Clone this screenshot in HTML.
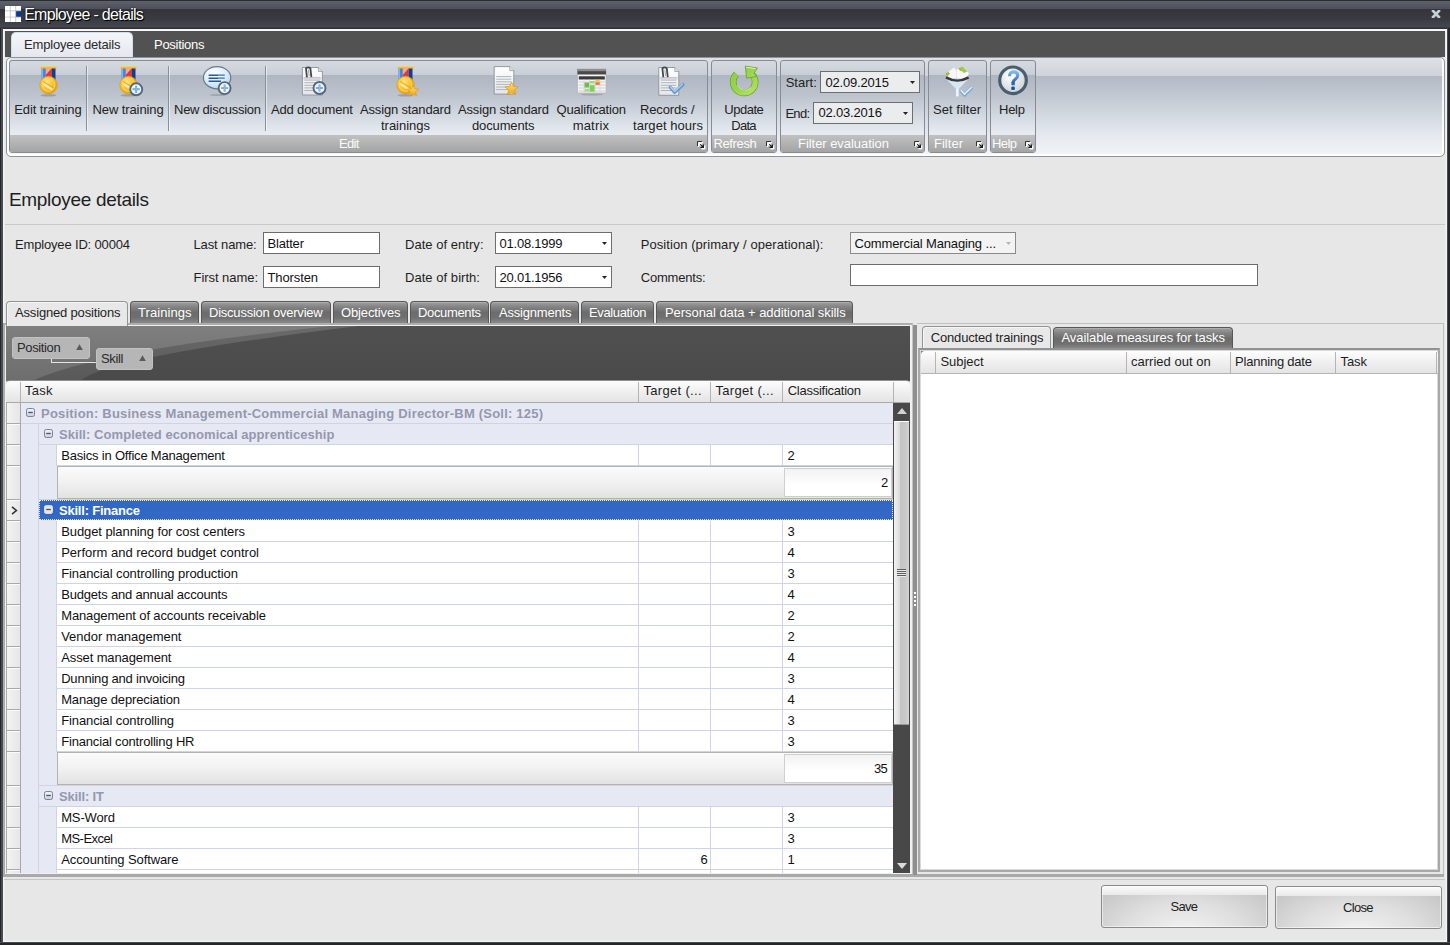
<!DOCTYPE html>
<html><head><meta charset="utf-8"><title>Employee - details</title>
<style>
html,body{margin:0;padding:0}
body{width:1450px;height:945px;overflow:hidden;background:#e7e7e7;font-family:"Liberation Sans", sans-serif;position:relative}
div,span,svg{position:absolute;box-sizing:border-box}
.t{white-space:nowrap;display:block}
</style></head><body>
<div style="left:0px;top:0px;width:1450px;height:29px;background:linear-gradient(#2b2d31 0,#2b2d31 1px,#5d616c 1px,#4d5059 9px,#33353a 9px,#383a40 18px,#44474f 27px,#2e3034 28px,#2e3034 29px)"></div>
<div style="left:0px;top:28px;width:3px;height:917px;background:linear-gradient(90deg,#25272b 0,#25272b 1.5px,#484b52 1.5px,#484b52 3px)"></div>
<div style="left:1447px;top:28px;width:3px;height:917px;background:linear-gradient(90deg,#484b52 0,#484b52 1.5px,#25272b 1.5px,#25272b 3px)"></div>
<div style="left:0px;top:942px;width:1450px;height:3px;background:linear-gradient(#484b52 0,#484b52 1.5px,#25272b 1.5px,#25272b 3px)"></div>
<div style="left:3px;top:29px;width:1444px;height:913px;border:1px solid #f4f4f4;border-top:2px solid #f6f6f6;box-shadow:inset 0 0 0 1px #ececec"></div>
<svg style="left:5px;top:6px" width="16" height="16" viewBox="0 0 16 16"><rect width="16" height="16" fill="#fff"/><rect x="10.8" y="4.8" width="5.2" height="6.3" fill="#0a3a96"/><path d="M5.3 0V16M10.7 0V16M0 4.8H16M0 11.1H16" stroke="#b9b9b9" stroke-width=".7"/></svg>
<span class="t" style="left:24.14px;top:7.06px;font-size:16px;line-height:16px;color:#fff;letter-spacing:-0.700px;text-shadow:1px 1px 0 #000,0 0 2px #000;">Employee - details</span>
<svg style="left:1431px;top:10px" width="10" height="8" viewBox="0 0 10 8"><path d="M1.2 0L8.8 8M8.8 0L1.2 8" stroke="#c9cdd7" stroke-width="2.7"/></svg>
<div style="left:5px;top:31px;width:1440px;height:26px;background:#525252"></div>
<div style="left:11px;top:32px;width:122px;height:27px;background:linear-gradient(#f4f6f9,#e3e6ec);border:1px solid #cfe0ea;border-bottom:none;border-radius:5px 5px 0 0"></div>
<span class="t" style="left:24.0px;top:38.00px;font-size:13px;line-height:13px;color:#2a2a2a;letter-spacing:-0.167px;">Employee details</span>
<span class="t" style="left:154.0px;top:38.00px;font-size:13px;line-height:13px;color:#fff;letter-spacing:-0.281px;">Positions</span>
<div style="left:6px;top:57px;width:1439px;height:100px;border:1px solid #8f949b;border-radius:5px;background:linear-gradient(#dee1e6 0,#cfd3da 18px,#b4bac5 18px,#c6ccd5 42px,#e3e8ee 75px,#f1f4f8 96px);box-shadow:inset 2px 0 0 rgba(255,255,255,.85),inset -2px 0 0 rgba(255,255,255,.85),inset 0 -2px 0 rgba(255,255,255,.9)"></div>
<div style="left:9px;top:60px;width:699px;height:93px;border:1px solid #868b94;border-radius:3px;overflow:hidden;background:linear-gradient(#d6dae0 0,#c9ced6 14px,#afb6c1 14px,#bdc4ce 35px,#e0e5ec 66px,#e9edf3 75px)"><div style="left:0;right:0;top:74px;height:18px;background:linear-gradient(#c1c1c1,#a2a2a2)"></div><svg style="left:687px;top:80px" width="9" height="9" viewBox="0 0 9 9"><path d="M1.5 6V1.5H6M8 4.5V8H4.5Z" fill="#fff" stroke="#fff" stroke-width="1" fill-opacity=".9" stroke-opacity=".8"/><path d="M0.5 5V0.5H5" fill="none" stroke="#333" stroke-width="1"/><path d="M7 3V7H3Z" fill="#1c1c1c"/><path d="M3.2 3.2L6 6" stroke="#1c1c1c" stroke-width="1"/></svg></div>
<span class="t" style="left:339.1px;top:136.90px;font-size:13px;line-height:13px;color:#fbfbfb;letter-spacing:-0.700px;">Edit</span>
<div style="left:711px;top:60px;width:66px;height:93px;border:1px solid #868b94;border-radius:3px;overflow:hidden;background:linear-gradient(#d6dae0 0,#c9ced6 14px,#afb6c1 14px,#bdc4ce 35px,#e0e5ec 66px,#e9edf3 75px)"><div style="left:0;right:0;top:74px;height:18px;background:linear-gradient(#c1c1c1,#a2a2a2)"></div><svg style="left:54px;top:80px" width="9" height="9" viewBox="0 0 9 9"><path d="M1.5 6V1.5H6M8 4.5V8H4.5Z" fill="#fff" stroke="#fff" stroke-width="1" fill-opacity=".9" stroke-opacity=".8"/><path d="M0.5 5V0.5H5" fill="none" stroke="#333" stroke-width="1"/><path d="M7 3V7H3Z" fill="#1c1c1c"/><path d="M3.2 3.2L6 6" stroke="#1c1c1c" stroke-width="1"/></svg></div>
<span class="t" style="left:713.5px;top:136.90px;font-size:13px;line-height:13px;color:#fbfbfb;letter-spacing:-0.372px;">Refresh</span>
<div style="left:780px;top:60px;width:145px;height:93px;border:1px solid #868b94;border-radius:3px;overflow:hidden;background:linear-gradient(#d6dae0 0,#c9ced6 14px,#afb6c1 14px,#bdc4ce 35px,#e0e5ec 66px,#e9edf3 75px)"><div style="left:0;right:0;top:74px;height:18px;background:linear-gradient(#c1c1c1,#a2a2a2)"></div><svg style="left:133px;top:80px" width="9" height="9" viewBox="0 0 9 9"><path d="M1.5 6V1.5H6M8 4.5V8H4.5Z" fill="#fff" stroke="#fff" stroke-width="1" fill-opacity=".9" stroke-opacity=".8"/><path d="M0.5 5V0.5H5" fill="none" stroke="#333" stroke-width="1"/><path d="M7 3V7H3Z" fill="#1c1c1c"/><path d="M3.2 3.2L6 6" stroke="#1c1c1c" stroke-width="1"/></svg></div>
<span class="t" style="left:798.0px;top:136.90px;font-size:13px;line-height:13px;color:#fbfbfb;letter-spacing:-0.049px;">Filter evaluation</span>
<div style="left:928px;top:60px;width:59px;height:93px;border:1px solid #868b94;border-radius:3px;overflow:hidden;background:linear-gradient(#d6dae0 0,#c9ced6 14px,#afb6c1 14px,#bdc4ce 35px,#e0e5ec 66px,#e9edf3 75px)"><div style="left:0;right:0;top:74px;height:18px;background:linear-gradient(#c1c1c1,#a2a2a2)"></div><svg style="left:47px;top:80px" width="9" height="9" viewBox="0 0 9 9"><path d="M1.5 6V1.5H6M8 4.5V8H4.5Z" fill="#fff" stroke="#fff" stroke-width="1" fill-opacity=".9" stroke-opacity=".8"/><path d="M0.5 5V0.5H5" fill="none" stroke="#333" stroke-width="1"/><path d="M7 3V7H3Z" fill="#1c1c1c"/><path d="M3.2 3.2L6 6" stroke="#1c1c1c" stroke-width="1"/></svg></div>
<span class="t" style="left:934.0px;top:136.90px;font-size:13px;line-height:13px;color:#fbfbfb;letter-spacing:0.022px;">Filter</span>
<div style="left:990px;top:60px;width:46px;height:93px;border:1px solid #868b94;border-radius:3px;overflow:hidden;background:linear-gradient(#d6dae0 0,#c9ced6 14px,#afb6c1 14px,#bdc4ce 35px,#e0e5ec 66px,#e9edf3 75px)"><div style="left:0;right:0;top:74px;height:18px;background:linear-gradient(#c1c1c1,#a2a2a2)"></div><svg style="left:34px;top:80px" width="9" height="9" viewBox="0 0 9 9"><path d="M1.5 6V1.5H6M8 4.5V8H4.5Z" fill="#fff" stroke="#fff" stroke-width="1" fill-opacity=".9" stroke-opacity=".8"/><path d="M0.5 5V0.5H5" fill="none" stroke="#333" stroke-width="1"/><path d="M7 3V7H3Z" fill="#1c1c1c"/><path d="M3.2 3.2L6 6" stroke="#1c1c1c" stroke-width="1"/></svg></div>
<span class="t" style="left:992.0px;top:136.90px;font-size:13px;line-height:13px;color:#fbfbfb;letter-spacing:-0.583px;">Help</span>
<div style="left:86px;top:66px;width:2px;height:65px;background:linear-gradient(90deg,#8a8f98 0,#8a8f98 1px,rgba(255,255,255,.5) 1px)"></div>
<div style="left:168px;top:66px;width:2px;height:65px;background:linear-gradient(90deg,#8a8f98 0,#8a8f98 1px,rgba(255,255,255,.5) 1px)"></div>
<div style="left:265px;top:66px;width:2px;height:65px;background:linear-gradient(90deg,#8a8f98 0,#8a8f98 1px,rgba(255,255,255,.5) 1px)"></div>
<svg style="left:32px;top:65px" width="34" height="32" viewBox="0 0 34 32"><ellipse cx="16.5" cy="30.3" rx="8" ry="1.2" fill="rgba(90,95,105,.35)"/><rect x="9.5" y="3" width="4.3" height="13" fill="#3f86d6"/><rect x="9.5" y="3" width="1.6" height="13" fill="#7fb4ea"/><rect x="13.8" y="3" width="6" height="13" fill="#d63a42"/><path d="M13.8 3H19.8L13.8 10Z" fill="#f2a9a6"/><rect x="19.8" y="3" width="3.7" height="13" fill="#123c92"/><rect x="8.7" y="1.3" width="15.8" height="2.2" rx=".6" fill="#f3b322"/><rect x="8.7" y="1.3" width="15.8" height=".9" rx=".4" fill="#fbd96f"/><circle cx="16.5" cy="20" r="8.7" fill="url(#gGold)" stroke="#e2a015" stroke-width=".8"/><circle cx="16.5" cy="20" r="6.3" fill="none" stroke="#fbd66a" stroke-width="1"/><path d="M11.5 16.5L21 22.5" stroke="#e8a51c" stroke-width="1" stroke-linecap="round"/><path d="M12 19.5L19.5 24" stroke="#fde9a6" stroke-width="2" stroke-linecap="round"/></svg>
<span class="t" style="left:14.2px;top:102.60px;font-size:13px;line-height:13px;color:#222;letter-spacing:-0.096px;">Edit training</span>
<svg style="left:112px;top:65px" width="34" height="32" viewBox="0 0 34 32"><ellipse cx="16.5" cy="30.3" rx="8" ry="1.2" fill="rgba(90,95,105,.35)"/><rect x="9.5" y="3" width="4.3" height="13" fill="#3f86d6"/><rect x="9.5" y="3" width="1.6" height="13" fill="#7fb4ea"/><rect x="13.8" y="3" width="6" height="13" fill="#d63a42"/><path d="M13.8 3H19.8L13.8 10Z" fill="#f2a9a6"/><rect x="19.8" y="3" width="3.7" height="13" fill="#123c92"/><rect x="8.7" y="1.3" width="15.8" height="2.2" rx=".6" fill="#f3b322"/><rect x="8.7" y="1.3" width="15.8" height=".9" rx=".4" fill="#fbd96f"/><circle cx="16.5" cy="20" r="8.7" fill="url(#gGold)" stroke="#e2a015" stroke-width=".8"/><circle cx="16.5" cy="20" r="6.3" fill="none" stroke="#fbd66a" stroke-width="1"/><path d="M11.5 16.5L21 22.5" stroke="#e8a51c" stroke-width="1" stroke-linecap="round"/><path d="M12 19.5L19.5 24" stroke="#fde9a6" stroke-width="2" stroke-linecap="round"/><circle cx="24.2" cy="24.3" r="6" fill="#f2f6fa" stroke="#52687c" stroke-width="1.9"/><path d="M24.2 20.7V27.900000000000002M20.599999999999998 24.3H27.8" stroke="#5e9fe4" stroke-width="1.9"/><path d="M24.2 20.7V27.900000000000002M20.599999999999998 24.3H27.8" stroke="#9cc4ee" stroke-width=".7"/></svg>
<span class="t" style="left:92.5px;top:102.60px;font-size:13px;line-height:13px;color:#222;letter-spacing:-0.097px;">New training</span>
<svg style="left:201px;top:65px" width="34" height="32" viewBox="0 0 34 32"><ellipse cx="17" cy="30" rx="8" ry="1.1" fill="rgba(90,95,105,.3)"/><path d="M19 21L24.5 28L25.5 19Z" fill="#b7d3ea" stroke="#70777e" stroke-width=".8"/><ellipse cx="16.1" cy="12.7" rx="13.7" ry="11.1" fill="url(#gBub)" stroke="#70777e" stroke-width="1.2"/><path d="M7.6 10.3H23.6M7.6 13.3H23.6M7.6 16.3H20" stroke="#2a55a0" stroke-width="1.5"/><path d="M17 10.3H23.6M17 13.3H23.6" stroke="#9cc3e6" stroke-width="1.5" stroke-opacity=".55"/><circle cx="23.6" cy="23.1" r="6" fill="#f2f6fa" stroke="#52687c" stroke-width="1.9"/><path d="M23.6 19.5V26.700000000000003M20.0 23.1H27.200000000000003" stroke="#5e9fe4" stroke-width="1.9"/><path d="M23.6 19.5V26.700000000000003M20.0 23.1H27.200000000000003" stroke="#9cc4ee" stroke-width=".7"/></svg>
<span class="t" style="left:174.0px;top:102.60px;font-size:13px;line-height:13px;color:#222;letter-spacing:-0.256px;">New discussion</span>
<svg style="left:296px;top:65px" width="34" height="32" viewBox="0 0 34 32"><path d="M6.4 2.5H22.4L26.4 6.5V30.0H6.4Z" fill="url(#gPage)" stroke="#8d9198" stroke-width=".9"/><path d="M22.4 2.5V6.5H26.4" fill="#dfe2e6" stroke="#8d9198" stroke-width=".7"/><path d="M8.4 12.5H23.9" stroke="#a9adb5" stroke-width=".9"/><path d="M8.4 15.1H23.9" stroke="#a9adb5" stroke-width=".9"/><path d="M8.4 17.7H23.9" stroke="#a9adb5" stroke-width=".9"/><path d="M8.4 20.3H23.9" stroke="#a9adb5" stroke-width=".9"/><path d="M8.4 22.9H23.9" stroke="#a9adb5" stroke-width=".9"/><path d="M8.4 25.5H23.9" stroke="#a9adb5" stroke-width=".9"/><path d="M11.0 13.0L10.0 3.5Q12.2 1.3 14.4 3.5L15.4 12.5" fill="none" stroke="#44474d" stroke-width="1.8"/><path d="M12.4 4.5L13.2 11.0" stroke="#a4a8b0" stroke-width="1"/><rect x="7.4" y="12.0" width="18" height="2.6" fill="#c9ccd1" fill-opacity=".7"/><circle cx="23.5" cy="23" r="6" fill="#f2f6fa" stroke="#52687c" stroke-width="1.9"/><path d="M23.5 19.4V26.6M19.9 23H27.1" stroke="#5e9fe4" stroke-width="1.9"/><path d="M23.5 19.4V26.6M19.9 23H27.1" stroke="#9cc4ee" stroke-width=".7"/></svg>
<span class="t" style="left:271.0px;top:102.60px;font-size:13px;line-height:13px;color:#222;letter-spacing:-0.168px;">Add document</span>
<svg style="left:391px;top:65px" width="34" height="32" viewBox="0 0 34 32"><ellipse cx="14.5" cy="30.3" rx="8" ry="1.2" fill="rgba(90,95,105,.35)"/><rect x="7.5" y="3" width="4.3" height="13" fill="#3f86d6"/><rect x="7.5" y="3" width="1.6" height="13" fill="#7fb4ea"/><rect x="11.8" y="3" width="6" height="13" fill="#d63a42"/><path d="M11.8 3H17.8L11.8 10Z" fill="#f2a9a6"/><rect x="17.8" y="3" width="3.7" height="13" fill="#123c92"/><rect x="6.699999999999999" y="1.3" width="15.8" height="2.2" rx=".6" fill="#f3b322"/><rect x="6.699999999999999" y="1.3" width="15.8" height=".9" rx=".4" fill="#fbd96f"/><circle cx="14.5" cy="20" r="8.7" fill="url(#gGold)" stroke="#e2a015" stroke-width=".8"/><circle cx="14.5" cy="20" r="6.3" fill="none" stroke="#fbd66a" stroke-width="1"/><path d="M9.5 16.5L19 22.5" stroke="#e8a51c" stroke-width="1" stroke-linecap="round"/><path d="M10 19.5L17.5 24" stroke="#fde9a6" stroke-width="2" stroke-linecap="round"/><polygon points="22.00,20.00 23.59,23.82 27.71,24.15 24.57,26.83 25.53,30.85 22.00,28.70 18.47,30.85 19.43,26.83 16.29,24.15 20.41,23.82" fill="url(#gStar)" stroke="#e79c12" stroke-width=".8" stroke-linejoin="round"/></svg>
<span class="t" style="left:360.0px;top:102.60px;font-size:13px;line-height:13px;color:#222;letter-spacing:-0.160px;">Assign standard</span>
<span class="t" style="left:381.0px;top:118.80px;font-size:13px;line-height:13px;color:#222;letter-spacing:-0.018px;">trainings</span>
<svg style="left:488.5px;top:65px" width="34" height="32" viewBox="0 0 34 32"><path d="M5.2 1.6H20.8L24.8 5.6V29.1H5.2Z" fill="url(#gPage)" stroke="#8d9198" stroke-width=".9"/><path d="M20.8 1.6V5.6H24.8" fill="#dfe2e6" stroke="#8d9198" stroke-width=".7"/><path d="M7.2 11.6H22.3" stroke="#a9adb5" stroke-width=".9"/><path d="M7.2 14.2H22.3" stroke="#a9adb5" stroke-width=".9"/><path d="M7.2 16.8H22.3" stroke="#a9adb5" stroke-width=".9"/><path d="M7.2 19.4H22.3" stroke="#a9adb5" stroke-width=".9"/><path d="M7.2 22.0H22.3" stroke="#a9adb5" stroke-width=".9"/><path d="M7.2 24.6H22.3" stroke="#a9adb5" stroke-width=".9"/><polygon points="22.60,17.00 24.45,21.45 29.26,21.84 25.60,24.97 26.71,29.66 22.60,27.15 18.49,29.66 19.60,24.97 15.94,21.84 20.75,21.45" fill="url(#gStar)" stroke="#e79c12" stroke-width=".8" stroke-linejoin="round"/></svg>
<span class="t" style="left:458.0px;top:102.60px;font-size:13px;line-height:13px;color:#222;letter-spacing:-0.160px;">Assign standard</span>
<span class="t" style="left:472.0px;top:118.80px;font-size:13px;line-height:13px;color:#222;letter-spacing:-0.137px;">documents</span>
<svg style="left:576px;top:65px" width="34" height="32" viewBox="0 0 34 32"><ellipse cx="16" cy="29.5" rx="11" ry="1.1" fill="rgba(90,95,105,.3)"/><rect x="1.5" y="4" width="28.5" height="24" fill="#f4f4f4" stroke="#b3b3b3" stroke-width=".7"/><rect x="1.5" y="4" width="28.5" height="5.5" fill="#4a4a4a"/><rect x="1.5" y="4" width="28.5" height="2.2" fill="#8e8e8e"/><rect x="2.8" y="11.3" width="26" height="3.2" fill="#3a3a3a"/><path d="M2.8 17H28.8M2.8 20H28.8M2.8 23H28.8M2.8 26H28.8" stroke="#c9c9c9" stroke-width=".8"/><path d="M8 14.5V27.5M13.5 14.5V27.5M19 14.5V27.5M24 14.5V27.5" stroke="#d4d4d4" stroke-width=".7"/><rect x="8.5" y="17.5" width="4.6" height="5" fill="#6cc04a"/><rect x="13.8" y="20.2" width="4.8" height="6.5" fill="#7fd05a"/><rect x="13.8" y="16" width="4.8" height="2.5" fill="#9bdc7a"/><rect x="19.4" y="17.3" width="4.3" height="2.5" fill="#ef6b4a"/><rect x="19.4" y="14.8" width="4.3" height="2" fill="#f3c64a"/><rect x="8.5" y="24" width="4.6" height="2.6" fill="#a5dd86"/></svg>
<span class="t" style="left:556.5px;top:102.60px;font-size:13px;line-height:13px;color:#222;letter-spacing:-0.171px;">Qualification</span>
<span class="t" style="left:572.7px;top:118.80px;font-size:13px;line-height:13px;color:#222;letter-spacing:0.182px;">matrix</span>
<svg style="left:653.5px;top:65px" width="34" height="32" viewBox="0 0 34 32"><path d="M4.8 2.5H20.8L24.8 6.5V30.3H4.8Z" fill="url(#gPage)" stroke="#8d9198" stroke-width=".9"/><path d="M20.8 2.5V6.5H24.8" fill="#dfe2e6" stroke="#8d9198" stroke-width=".7"/><path d="M6.8 12.5H22.3" stroke="#a9adb5" stroke-width=".9"/><path d="M6.8 15.1H22.3" stroke="#a9adb5" stroke-width=".9"/><path d="M6.8 17.7H22.3" stroke="#a9adb5" stroke-width=".9"/><path d="M6.8 20.3H22.3" stroke="#a9adb5" stroke-width=".9"/><path d="M6.8 22.9H22.3" stroke="#a9adb5" stroke-width=".9"/><path d="M6.8 25.5H22.3" stroke="#a9adb5" stroke-width=".9"/><path d="M9.399999999999999 13.0L8.4 3.5Q10.6 1.3 12.8 3.5L13.8 12.5" fill="none" stroke="#44474d" stroke-width="1.8"/><path d="M10.8 4.5L11.6 11.0" stroke="#a4a8b0" stroke-width="1"/><rect x="5.8" y="12.0" width="18" height="2.6" fill="#c9ccd1" fill-opacity=".7"/><path d="M16.2 22.3L20.7 27.4L29 19.5" fill="none" stroke="#6497cf" stroke-width="3.2" stroke-linecap="round" stroke-linejoin="round"/><path d="M16.5 22L20.7 26.5L28.6 19.1" fill="none" stroke="#b5d3f0" stroke-width="1.1" stroke-linecap="round" stroke-linejoin="round"/></svg>
<span class="t" style="left:640.0px;top:102.60px;font-size:13px;line-height:13px;color:#222;letter-spacing:-0.143px;">Records /</span>
<span class="t" style="left:633.0px;top:118.80px;font-size:13px;line-height:13px;color:#222;letter-spacing:0.057px;">target hours</span>
<svg style="left:727px;top:65px" width="34" height="32" viewBox="0 0 34 32"><path d="M9.4 9.2A11 11 0 1 0 24.6 8.9" fill="none" stroke="#679f2c" stroke-width="6.6"/><path d="M9.4 9.2A11 11 0 1 0 24.6 8.9" fill="none" stroke="url(#gGreen)" stroke-width="5.2"/><path d="M10.2 20A8.4 8.4 0 0 0 24 22.5" fill="none" stroke="#cdf08e" stroke-width="1.1" stroke-opacity=".7"/><path d="M18.3 1.1L30.5 3L27 8.2L29.6 11.4L19.6 13.2Z" fill="url(#gGreen)" stroke="#679f2c" stroke-width=".8" stroke-linejoin="round"/><path d="M19.2 2.2L28.5 3.6" stroke="#dff5b8" stroke-width="1"/></svg>
<span class="t" style="left:724.3px;top:102.60px;font-size:13px;line-height:13px;color:#222;letter-spacing:-0.484px;">Update</span>
<span class="t" style="left:731.22px;top:118.80px;font-size:13px;line-height:13px;color:#222;letter-spacing:-0.700px;">Data</span>
<svg style="left:941px;top:65px" width="34" height="32" viewBox="0 0 34 32"><path d="M4.5 8.7L13 2.3L20.5 12L9 14.5Z" fill="#f7f7f7" stroke="#dadada" stroke-width=".5"/><path d="M4.5 8.7L7.3 6.6L9 9L6.2 11Z" fill="#86cc46"/><path d="M4.5 8.7L5.4 8L7 10.4L6.2 11Z" fill="#f08a2c"/><path d="M15.5 4.6L21.3 1.3L28 8L25.5 14L15.5 13.5Z" fill="#f9f9f9" stroke="#dadada" stroke-width=".5"/><path d="M17.5 3.5L21.3 1.3L26.4 6.4L23 8Z" fill="#8fd14e"/><path d="M17.5 3.5L18.8 2.7L20.4 5.3L19.2 6Z" fill="#f08a2c"/><path d="M6.2 15L15 24.3V31.5H17.7V24.3L26.5 15Z" fill="#dcebf6" fill-opacity=".9" stroke="#b4cbe0" stroke-width=".7"/><path d="M15.2 24V31.3H17.4V24Z" fill="#f2f8fd"/><path d="M5 12.3Q16.3 16 27.6 12.3Q16.3 18.6 5 12.3Z" fill="#d0d4d8"/><path d="M5 12.4Q16.3 18.8 27.6 12.4" fill="none" stroke="#37393c" stroke-width="2.4"/><path d="M19.5 25.5L23.5 30L31 22.5" fill="none" stroke="#74a8dc" stroke-width="3.3" stroke-linejoin="round"/><path d="M19.8 25.2L23.5 29.2L30.7 22.2" fill="none" stroke="#e6f1fb" stroke-width="1.6"/></svg>
<span class="t" style="left:933.0px;top:102.60px;font-size:13px;line-height:13px;color:#222;letter-spacing:0.035px;">Set filter</span>
<svg style="left:996px;top:65px" width="34" height="32" viewBox="0 0 34 32"><circle cx="17" cy="15.3" r="13.3" fill="url(#gHelp)" stroke="#4a5e6d" stroke-width="3.2"/><path d="M13.6 11.2Q13.4 6.9 17.6 6.9Q21.7 6.9 21.7 10.3Q21.7 12.6 19.3 14.2Q17.1 15.6 17.1 17.6" fill="none" stroke="url(#gQ)" stroke-width="3.1"/><rect x="15.4" y="16.8" width="3.4" height="3.4" fill="#2f63b3"/><rect x="15.2" y="21.6" width="3.7" height="3.5" rx="1.3" fill="#1f4f9f"/></svg>
<span class="t" style="left:999.0px;top:102.60px;font-size:13px;line-height:13px;color:#222;letter-spacing:-0.250px;">Help</span>
<span class="t" style="left:785.7px;top:75.80px;font-size:13px;line-height:13px;color:#222;letter-spacing:0.004px;">Start:</span>
<span class="t" style="left:785.38px;top:106.50px;font-size:13px;line-height:13px;color:#222;letter-spacing:-0.700px;">End:</span>
<div style="left:820px;top:71px;width:100px;height:22px;background:#ebecee;border:1px solid #6e6e6e"><svg style="right:4.3px;top:9.4px" width="5" height="3" viewBox="0 0 5 3"><path d="M0 0H5L2.5 3Z" fill="#222"/></svg></div>
<span class="t" style="left:825.4px;top:75.50px;font-size:13px;line-height:13px;color:#111;letter-spacing:-0.175px;">02.09.2015</span>
<div style="left:813px;top:102px;width:100px;height:22px;background:#ebecee;border:1px solid #6e6e6e"><svg style="right:4.3px;top:9.4px" width="5" height="3" viewBox="0 0 5 3"><path d="M0 0H5L2.5 3Z" fill="#222"/></svg></div>
<span class="t" style="left:818.4px;top:106.30px;font-size:13px;line-height:13px;color:#111;letter-spacing:-0.175px;">02.03.2016</span>
<svg width="0" height="0" style="left:0;top:0"><defs><radialGradient id="gGold" cx="40%" cy="35%" r="70%"><stop offset="0" stop-color="#ffe58a"/><stop offset=".6" stop-color="#f7bd25"/><stop offset="1" stop-color="#e09a10"/></radialGradient><linearGradient id="gPage" x1="0" y1="0" x2="0" y2="1"><stop offset="0" stop-color="#fff"/><stop offset="1" stop-color="#e4e6ea"/></linearGradient><radialGradient id="gBub" cx="40%" cy="30%" r="80%"><stop offset="0" stop-color="#ffffff"/><stop offset=".6" stop-color="#d4ebf9"/><stop offset="1" stop-color="#a6d0ee"/></radialGradient><linearGradient id="gGreen" x1="0" y1="0" x2="1" y2="1"><stop offset="0" stop-color="#8ed046"/><stop offset=".55" stop-color="#9bd552"/><stop offset="1" stop-color="#b4e266"/></linearGradient><radialGradient id="gHelp" cx="40%" cy="35%" r="75%"><stop offset="0" stop-color="#fff"/><stop offset="1" stop-color="#c4ccd4"/></radialGradient><linearGradient id="gStar" x1="0" y1="0" x2="0" y2="1"><stop offset="0" stop-color="#ffe27a"/><stop offset="1" stop-color="#f0a818"/></linearGradient><linearGradient id="gQ" x1="0" y1="0" x2="0" y2="1"><stop offset="0" stop-color="#7fb8ea"/><stop offset="1" stop-color="#2f63b3"/></linearGradient></defs></svg>
<svg width="0" height="0" style="left:0;top:0"><defs><linearGradient id="gExp" x1="0" y1="0" x2="0" y2="1"><stop offset="0" stop-color="#f3f5fa"/><stop offset="1" stop-color="#c9d0e1"/></linearGradient></defs></svg>
<span class="t" style="left:9.0px;top:189.92px;font-size:19px;line-height:19px;color:#1e1e1e;letter-spacing:-0.314px;">Employee details</span>
<div style="left:5px;top:224px;width:1440px;height:1px;background:#c9c9c9"></div>
<span class="t" style="left:15.0px;top:237.70px;font-size:13px;line-height:13px;color:#1e1e1e;letter-spacing:-0.165px;">Employee ID: 00004</span>
<span class="t" style="left:193.5px;top:237.70px;font-size:13px;line-height:13px;color:#1e1e1e;letter-spacing:-0.125px;">Last name:</span>
<span class="t" style="left:193.5px;top:271.00px;font-size:13px;line-height:13px;color:#1e1e1e;letter-spacing:-0.052px;">First name:</span>
<span class="t" style="left:405.0px;top:237.70px;font-size:13px;line-height:13px;color:#1e1e1e;letter-spacing:0.035px;">Date of entry:</span>
<span class="t" style="left:405.0px;top:271.00px;font-size:13px;line-height:13px;color:#1e1e1e;letter-spacing:0.043px;">Date of birth:</span>
<span class="t" style="left:640.7px;top:237.70px;font-size:13px;line-height:13px;color:#1e1e1e;letter-spacing:0.067px;">Position (primary / operational):</span>
<span class="t" style="left:640.7px;top:271.00px;font-size:13px;line-height:13px;color:#1e1e1e;letter-spacing:-0.184px;">Comments:</span>
<div style="left:263px;top:232px;width:117px;height:22px;background:#fff;border:1px solid #6b6b6b"></div>
<span class="t" style="left:267.5px;top:236.70px;font-size:13px;line-height:13px;color:#111;letter-spacing:-0.180px;">Blatter</span>
<div style="left:263px;top:266px;width:117px;height:22px;background:#fff;border:1px solid #6b6b6b"></div>
<span class="t" style="left:267.5px;top:270.70px;font-size:13px;line-height:13px;color:#111;letter-spacing:-0.116px;">Thorsten</span>
<div style="left:495px;top:232px;width:117px;height:22px;background:#fff;border:1px solid #6e6e6e"><svg style="right:4.3px;top:9.4px" width="5" height="3" viewBox="0 0 5 3"><path d="M0 0H5L2.5 3Z" fill="#222"/></svg></div>
<span class="t" style="left:499.5px;top:236.90px;font-size:13px;line-height:13px;color:#111;letter-spacing:-0.231px;">01.08.1999</span>
<div style="left:495px;top:266px;width:117px;height:22px;background:#fff;border:1px solid #6e6e6e"><svg style="right:4.3px;top:9.4px" width="5" height="3" viewBox="0 0 5 3"><path d="M0 0H5L2.5 3Z" fill="#222"/></svg></div>
<span class="t" style="left:499.5px;top:270.90px;font-size:13px;line-height:13px;color:#111;letter-spacing:-0.231px;">20.01.1956</span>
<div style="left:850px;top:232px;width:166px;height:22px;background:#f3f3f3;border:1px solid #8a8a8a"><svg style="right:4.3px;top:9.4px" width="5" height="3" viewBox="0 0 5 3"><path d="M0 0H5L2.5 3Z" fill="#b5b5b5"/></svg></div>
<span class="t" style="left:854.5px;top:236.90px;font-size:13px;line-height:13px;color:#111;letter-spacing:-0.136px;">Commercial Managing ...</span>
<div style="left:850px;top:264px;width:408px;height:22px;background:#fff;border:1px solid #6b6b6b"></div>
<div style="left:3px;top:323px;width:910px;height:553px;border:2px solid #adadad;border-right-width:1px;border-right-color:#c4c4c4;border-bottom:none;background:#f0f0f0"></div>
<div style="left:917px;top:323px;width:527px;height:553px;border:1px solid #c0c0c0;border-left:none;border-bottom:none;background:#e7e7e7"></div>
<div style="left:3px;top:874.3px;width:1441px;height:2.3px;background:#a9a9a9"></div>
<div style="left:4px;top:879px;width:1441px;height:1px;background:#c6c6c6"></div>
<div style="left:6px;top:300.5px;width:121.5px;height:25.0px;background:#e8e8e8;border:1px solid #939393;border-bottom:none;border-radius:4px 4px 0 0;box-shadow:inset 1px 1px 0 #f6f6f6"></div>
<span class="t" style="left:15.0px;top:306.00px;font-size:13px;line-height:13px;color:#1e1e1e;letter-spacing:-0.171px;">Assigned positions</span>
<div style="left:129.5px;top:301.3px;width:69.19999999999999px;height:21.69999999999999px;background:linear-gradient(#a0a0a0 0,#858585 22%,#6c6c6c 50%,#707070 75%,#898989 100%);border:1px solid #585858;border-bottom:none;border-radius:4px 4px 0 0;box-shadow:inset 0 1px 0 rgba(255,255,255,.18)"></div>
<span class="t" style="left:138.0px;top:306.00px;font-size:13px;line-height:13px;color:#fff;letter-spacing:0.064px;">Trainings</span>
<div style="left:200.5px;top:301.3px;width:130.2px;height:21.69999999999999px;background:linear-gradient(#a0a0a0 0,#858585 22%,#6c6c6c 50%,#707070 75%,#898989 100%);border:1px solid #585858;border-bottom:none;border-radius:4px 4px 0 0;box-shadow:inset 0 1px 0 rgba(255,255,255,.18)"></div>
<span class="t" style="left:209.0px;top:306.00px;font-size:13px;line-height:13px;color:#fff;letter-spacing:-0.226px;">Discussion overview</span>
<div style="left:332.5px;top:301.3px;width:75.0px;height:21.69999999999999px;background:linear-gradient(#a0a0a0 0,#858585 22%,#6c6c6c 50%,#707070 75%,#898989 100%);border:1px solid #585858;border-bottom:none;border-radius:4px 4px 0 0;box-shadow:inset 0 1px 0 rgba(255,255,255,.18)"></div>
<span class="t" style="left:341.0px;top:306.00px;font-size:13px;line-height:13px;color:#fff;letter-spacing:-0.134px;">Objectives</span>
<div style="left:409.5px;top:301.3px;width:79.19999999999999px;height:21.69999999999999px;background:linear-gradient(#a0a0a0 0,#858585 22%,#6c6c6c 50%,#707070 75%,#898989 100%);border:1px solid #585858;border-bottom:none;border-radius:4px 4px 0 0;box-shadow:inset 0 1px 0 rgba(255,255,255,.18)"></div>
<span class="t" style="left:418.0px;top:306.00px;font-size:13px;line-height:13px;color:#fff;letter-spacing:-0.344px;">Documents</span>
<div style="left:490px;top:301.3px;width:88.5px;height:21.69999999999999px;background:linear-gradient(#a0a0a0 0,#858585 22%,#6c6c6c 50%,#707070 75%,#898989 100%);border:1px solid #585858;border-bottom:none;border-radius:4px 4px 0 0;box-shadow:inset 0 1px 0 rgba(255,255,255,.18)"></div>
<span class="t" style="left:499.0px;top:306.00px;font-size:13px;line-height:13px;color:#fff;letter-spacing:-0.192px;">Assignments</span>
<div style="left:580.5px;top:301.3px;width:73.5px;height:21.69999999999999px;background:linear-gradient(#a0a0a0 0,#858585 22%,#6c6c6c 50%,#707070 75%,#898989 100%);border:1px solid #585858;border-bottom:none;border-radius:4px 4px 0 0;box-shadow:inset 0 1px 0 rgba(255,255,255,.18)"></div>
<span class="t" style="left:589.0px;top:306.00px;font-size:13px;line-height:13px;color:#fff;letter-spacing:-0.358px;">Evaluation</span>
<div style="left:656px;top:301.3px;width:196.5px;height:21.69999999999999px;background:linear-gradient(#a0a0a0 0,#858585 22%,#6c6c6c 50%,#707070 75%,#898989 100%);border:1px solid #585858;border-bottom:none;border-radius:4px 4px 0 0;box-shadow:inset 0 1px 0 rgba(255,255,255,.18)"></div>
<span class="t" style="left:665.0px;top:306.00px;font-size:13px;line-height:13px;color:#fff;letter-spacing:-0.056px;">Personal data + additional skills</span>
<div style="left:6px;top:326px;width:904px;height:55px;background:linear-gradient(#505050,#4a4a4a);overflow:hidden"><svg style="left:0;top:0" width="905" height="56" viewBox="0 0 905 56"><defs><linearGradient id="gSw" x1="0" y1="0" x2="0" y2="1"><stop offset="0" stop-color="#7f7f7f"/><stop offset="1" stop-color="#6d6d6d"/></linearGradient><linearGradient id="gSw2" x1="0" y1="0" x2="0" y2="1"><stop offset="0" stop-color="#6a6a6a"/><stop offset="1" stop-color="#585858"/></linearGradient></defs><path d="M0 0H352Q92 32 74 56H0Z" fill="url(#gSw2)"/><path d="M0 0H325Q87.5 24.5 24 56H0Z" fill="url(#gSw)"/></svg></div>
<div style="left:51px;top:358px;width:46px;height:5px;border-left:1px solid #e4e4e4;border-bottom:1px solid #e4e4e4"></div>
<div style="left:12px;top:337px;width:78px;height:22px;background:#b6b6b6;border-radius:3px;border:1px solid #c2c2c2"></div>
<span class="t" style="left:17.0px;top:340.70px;font-size:13px;line-height:13px;color:#2a2a2a;letter-spacing:-0.364px;">Position</span>
<svg style="left:75.5px;top:343.5px" width="7" height="6.5" viewBox="0 0 8 7"><path d="M4 0L8 7H0Z" fill="#5a5a5a"/></svg>
<div style="left:96px;top:348px;width:57px;height:22px;background:#b6b6b6;border-radius:3px;border:1px solid #c2c2c2"></div>
<span class="t" style="left:101.0px;top:352.00px;font-size:13px;line-height:13px;color:#2a2a2a;letter-spacing:-0.336px;">Skill</span>
<svg style="left:138.5px;top:354.5px" width="7" height="6.5" viewBox="0 0 8 7"><path d="M4 0L8 7H0Z" fill="#5a5a5a"/></svg>
<div style="left:6px;top:380px;width:904px;height:23px;background:linear-gradient(#fdfdfd,#f1f1f1 45%,#e4e4e4);border-top:1px solid #8f8f8f;border-bottom:1px solid #a9a9a9;border-radius:4px 4px 0 0"></div>
<div style="left:20px;top:382px;width:1px;height:20px;background:#b4b4b4"></div>
<div style="left:638px;top:382px;width:1px;height:20px;background:#b4b4b4"></div>
<div style="left:710px;top:382px;width:1px;height:20px;background:#b4b4b4"></div>
<div style="left:782px;top:382px;width:1px;height:20px;background:#b4b4b4"></div>
<div style="left:893px;top:382px;width:1px;height:20px;background:#b4b4b4"></div>
<span class="t" style="left:25.0px;top:384.00px;font-size:13px;line-height:13px;color:#1e1e1e;letter-spacing:0.255px;">Task</span>
<span class="t" style="left:643.5px;top:384.00px;font-size:13px;line-height:13px;color:#1e1e1e;letter-spacing:0.308px;">Target (...</span>
<span class="t" style="left:715.5px;top:384.00px;font-size:13px;line-height:13px;color:#1e1e1e;letter-spacing:0.308px;">Target (...</span>
<span class="t" style="left:787.7px;top:384.00px;font-size:13px;line-height:13px;color:#1e1e1e;letter-spacing:-0.253px;">Classification</span>
<div style="left:6px;top:403px;width:15px;height:470px;background:linear-gradient(90deg,#f3f3f3,#e6e6e6);border-right:1px solid #a9a9a9;border-left:1px solid #ababab"></div>
<div style="left:21px;top:403px;width:872px;height:470px;background:#e6e9f3"></div>
<div style="left:21px;top:403px;width:872px;height:21px;background:#e6e9f3;border-bottom:1px solid #cdd4e6;"></div>
<svg style="left:26px;top:408px" width="9" height="9" viewBox="0 0 9 9"><rect x=".5" y=".5" width="8" height="8" rx="1.8" fill="url(#gExp)" stroke="#7a8199"/><path d="M2.2 4.5H6.8" stroke="#4f556d" stroke-width="1.3"/></svg>
<span class="t" style="left:41.0px;top:406.50px;font-size:13px;line-height:13px;color:#9597af;letter-spacing:0.210px;font-weight:bold;">Position: Business Management-Commercial Managing Director-BM (Soll: 125)</span>
<div style="left:39px;top:424px;width:854px;height:21px;background:#e6e9f3;border-bottom:1px solid #cdd4e6;"></div>
<svg style="left:44px;top:429px" width="9" height="9" viewBox="0 0 9 9"><rect x=".5" y=".5" width="8" height="8" rx="1.8" fill="url(#gExp)" stroke="#7a8199"/><path d="M2.2 4.5H6.8" stroke="#4f556d" stroke-width="1.3"/></svg>
<span class="t" style="left:59.0px;top:427.50px;font-size:13px;line-height:13px;color:#9597af;letter-spacing:0.059px;font-weight:bold;">Skill: Completed economical apprenticeship</span>
<div style="left:56px;top:445px;width:837px;height:21px;background:#fff;border-bottom:1px solid #cdd4e6;border-left:1px solid #cdd4e6"></div>
<div style="left:638px;top:445px;width:1px;height:20px;background:#cdd4e6"></div>
<div style="left:710px;top:445px;width:1px;height:20px;background:#cdd4e6"></div>
<div style="left:782px;top:445px;width:1px;height:20px;background:#cdd4e6"></div>
<span class="t" style="left:61.2px;top:448.50px;font-size:13px;line-height:13px;color:#111;letter-spacing:-0.194px;">Basics in Office Management</span>
<span class="t" style="left:787.4px;top:448.50px;font-size:13px;line-height:13px;color:#111;letter-spacing:0.000px;">2</span>
<div style="left:57px;top:466px;width:836px;height:34px;background:#e6e9f3"></div>
<div style="left:57px;top:466px;width:836px;height:33px;background:linear-gradient(#fbfbfb,#f1f1f1 50%,#e2e2e2);border:1px solid #b2b2b2;box-shadow:0 1px 0 #d6d6d6"></div>
<div style="left:784px;top:468px;width:108px;height:29px;background:linear-gradient(#f2f2f2,#fff 60%);border:1px solid #cfcfcf"></div>
<span class="t" style="left:881px;top:476.00px;font-size:13px;line-height:13px;color:#111;letter-spacing:0.000px;">2</span>
<div style="left:39px;top:500px;width:854px;height:20px;background:#3367c5;outline:1px dotted #e8eefc;outline-offset:-1px;"></div>
<div style="left:56px;top:520px;width:837px;height:1px;background:#fff"></div>
<svg style="left:44px;top:505px" width="9" height="9" viewBox="0 0 9 9"><rect x=".5" y=".5" width="8" height="8" rx="1.8" fill="#e6e6e6" stroke="#dcdcdc"/><path d="M2.2 4.5H6.8" stroke="#505050" stroke-width="1.3"/></svg>
<span class="t" style="left:59.0px;top:503.50px;font-size:13px;line-height:13px;color:#fff;letter-spacing:-0.216px;font-weight:bold;">Skill: Finance</span>
<div style="left:56px;top:521px;width:837px;height:21px;background:#fff;border-bottom:1px solid #cdd4e6;border-left:1px solid #cdd4e6"></div>
<div style="left:638px;top:521px;width:1px;height:20px;background:#cdd4e6"></div>
<div style="left:710px;top:521px;width:1px;height:20px;background:#cdd4e6"></div>
<div style="left:782px;top:521px;width:1px;height:20px;background:#cdd4e6"></div>
<span class="t" style="left:61.2px;top:524.50px;font-size:13px;line-height:13px;color:#111;letter-spacing:-0.086px;">Budget planning for cost centers</span>
<span class="t" style="left:787.4px;top:524.50px;font-size:13px;line-height:13px;color:#111;letter-spacing:0.000px;">3</span>
<div style="left:56px;top:542px;width:837px;height:21px;background:#fff;border-bottom:1px solid #cdd4e6;border-left:1px solid #cdd4e6"></div>
<div style="left:638px;top:542px;width:1px;height:20px;background:#cdd4e6"></div>
<div style="left:710px;top:542px;width:1px;height:20px;background:#cdd4e6"></div>
<div style="left:782px;top:542px;width:1px;height:20px;background:#cdd4e6"></div>
<span class="t" style="left:61.2px;top:545.50px;font-size:13px;line-height:13px;color:#111;letter-spacing:-0.006px;">Perform and record budget control</span>
<span class="t" style="left:787.4px;top:545.50px;font-size:13px;line-height:13px;color:#111;letter-spacing:0.000px;">4</span>
<div style="left:56px;top:563px;width:837px;height:21px;background:#fff;border-bottom:1px solid #cdd4e6;border-left:1px solid #cdd4e6"></div>
<div style="left:638px;top:563px;width:1px;height:20px;background:#cdd4e6"></div>
<div style="left:710px;top:563px;width:1px;height:20px;background:#cdd4e6"></div>
<div style="left:782px;top:563px;width:1px;height:20px;background:#cdd4e6"></div>
<span class="t" style="left:61.2px;top:566.50px;font-size:13px;line-height:13px;color:#111;letter-spacing:-0.078px;">Financial controlling production</span>
<span class="t" style="left:787.4px;top:566.50px;font-size:13px;line-height:13px;color:#111;letter-spacing:0.000px;">3</span>
<div style="left:56px;top:584px;width:837px;height:21px;background:#fff;border-bottom:1px solid #cdd4e6;border-left:1px solid #cdd4e6"></div>
<div style="left:638px;top:584px;width:1px;height:20px;background:#cdd4e6"></div>
<div style="left:710px;top:584px;width:1px;height:20px;background:#cdd4e6"></div>
<div style="left:782px;top:584px;width:1px;height:20px;background:#cdd4e6"></div>
<span class="t" style="left:61.2px;top:587.50px;font-size:13px;line-height:13px;color:#111;letter-spacing:-0.193px;">Budgets and annual accounts</span>
<span class="t" style="left:787.4px;top:587.50px;font-size:13px;line-height:13px;color:#111;letter-spacing:0.000px;">4</span>
<div style="left:56px;top:605px;width:837px;height:21px;background:#fff;border-bottom:1px solid #cdd4e6;border-left:1px solid #cdd4e6"></div>
<div style="left:638px;top:605px;width:1px;height:20px;background:#cdd4e6"></div>
<div style="left:710px;top:605px;width:1px;height:20px;background:#cdd4e6"></div>
<div style="left:782px;top:605px;width:1px;height:20px;background:#cdd4e6"></div>
<span class="t" style="left:61.2px;top:608.50px;font-size:13px;line-height:13px;color:#111;letter-spacing:-0.127px;">Management of accounts receivable</span>
<span class="t" style="left:787.4px;top:608.50px;font-size:13px;line-height:13px;color:#111;letter-spacing:0.000px;">2</span>
<div style="left:56px;top:626px;width:837px;height:21px;background:#fff;border-bottom:1px solid #cdd4e6;border-left:1px solid #cdd4e6"></div>
<div style="left:638px;top:626px;width:1px;height:20px;background:#cdd4e6"></div>
<div style="left:710px;top:626px;width:1px;height:20px;background:#cdd4e6"></div>
<div style="left:782px;top:626px;width:1px;height:20px;background:#cdd4e6"></div>
<span class="t" style="left:61.2px;top:629.50px;font-size:13px;line-height:13px;color:#111;letter-spacing:-0.025px;">Vendor management</span>
<span class="t" style="left:787.4px;top:629.50px;font-size:13px;line-height:13px;color:#111;letter-spacing:0.000px;">2</span>
<div style="left:56px;top:647px;width:837px;height:21px;background:#fff;border-bottom:1px solid #cdd4e6;border-left:1px solid #cdd4e6"></div>
<div style="left:638px;top:647px;width:1px;height:20px;background:#cdd4e6"></div>
<div style="left:710px;top:647px;width:1px;height:20px;background:#cdd4e6"></div>
<div style="left:782px;top:647px;width:1px;height:20px;background:#cdd4e6"></div>
<span class="t" style="left:61.2px;top:650.50px;font-size:13px;line-height:13px;color:#111;letter-spacing:-0.114px;">Asset management</span>
<span class="t" style="left:787.4px;top:650.50px;font-size:13px;line-height:13px;color:#111;letter-spacing:0.000px;">4</span>
<div style="left:56px;top:668px;width:837px;height:21px;background:#fff;border-bottom:1px solid #cdd4e6;border-left:1px solid #cdd4e6"></div>
<div style="left:638px;top:668px;width:1px;height:20px;background:#cdd4e6"></div>
<div style="left:710px;top:668px;width:1px;height:20px;background:#cdd4e6"></div>
<div style="left:782px;top:668px;width:1px;height:20px;background:#cdd4e6"></div>
<span class="t" style="left:61.2px;top:671.50px;font-size:13px;line-height:13px;color:#111;letter-spacing:-0.207px;">Dunning and invoicing</span>
<span class="t" style="left:787.4px;top:671.50px;font-size:13px;line-height:13px;color:#111;letter-spacing:0.000px;">3</span>
<div style="left:56px;top:689px;width:837px;height:21px;background:#fff;border-bottom:1px solid #cdd4e6;border-left:1px solid #cdd4e6"></div>
<div style="left:638px;top:689px;width:1px;height:20px;background:#cdd4e6"></div>
<div style="left:710px;top:689px;width:1px;height:20px;background:#cdd4e6"></div>
<div style="left:782px;top:689px;width:1px;height:20px;background:#cdd4e6"></div>
<span class="t" style="left:61.2px;top:692.50px;font-size:13px;line-height:13px;color:#111;letter-spacing:-0.146px;">Manage depreciation</span>
<span class="t" style="left:787.4px;top:692.50px;font-size:13px;line-height:13px;color:#111;letter-spacing:0.000px;">4</span>
<div style="left:56px;top:710px;width:837px;height:21px;background:#fff;border-bottom:1px solid #cdd4e6;border-left:1px solid #cdd4e6"></div>
<div style="left:638px;top:710px;width:1px;height:20px;background:#cdd4e6"></div>
<div style="left:710px;top:710px;width:1px;height:20px;background:#cdd4e6"></div>
<div style="left:782px;top:710px;width:1px;height:20px;background:#cdd4e6"></div>
<span class="t" style="left:61.2px;top:713.50px;font-size:13px;line-height:13px;color:#111;letter-spacing:-0.105px;">Financial controlling</span>
<span class="t" style="left:787.4px;top:713.50px;font-size:13px;line-height:13px;color:#111;letter-spacing:0.000px;">3</span>
<div style="left:56px;top:731px;width:837px;height:21px;background:#fff;border-bottom:1px solid #cdd4e6;border-left:1px solid #cdd4e6"></div>
<div style="left:638px;top:731px;width:1px;height:20px;background:#cdd4e6"></div>
<div style="left:710px;top:731px;width:1px;height:20px;background:#cdd4e6"></div>
<div style="left:782px;top:731px;width:1px;height:20px;background:#cdd4e6"></div>
<span class="t" style="left:61.2px;top:734.50px;font-size:13px;line-height:13px;color:#111;letter-spacing:-0.173px;">Financial controlling HR</span>
<span class="t" style="left:787.4px;top:734.50px;font-size:13px;line-height:13px;color:#111;letter-spacing:0.000px;">3</span>
<div style="left:57px;top:752px;width:836px;height:34px;background:#e6e9f3"></div>
<div style="left:57px;top:752px;width:836px;height:33px;background:linear-gradient(#fbfbfb,#f1f1f1 50%,#e2e2e2);border:1px solid #b2b2b2;box-shadow:0 1px 0 #d6d6d6"></div>
<div style="left:784px;top:754px;width:108px;height:29px;background:linear-gradient(#f2f2f2,#fff 60%);border:1px solid #cfcfcf"></div>
<span class="t" style="left:873.97px;top:762.00px;font-size:13px;line-height:13px;color:#111;letter-spacing:-0.700px;">35</span>
<div style="left:39px;top:786px;width:854px;height:21px;background:#e6e9f3;border-bottom:1px solid #cdd4e6;"></div>
<svg style="left:44px;top:791px" width="9" height="9" viewBox="0 0 9 9"><rect x=".5" y=".5" width="8" height="8" rx="1.8" fill="url(#gExp)" stroke="#7a8199"/><path d="M2.2 4.5H6.8" stroke="#4f556d" stroke-width="1.3"/></svg>
<span class="t" style="left:59.0px;top:789.50px;font-size:13px;line-height:13px;color:#9597af;letter-spacing:-0.154px;font-weight:bold;">Skill: IT</span>
<div style="left:56px;top:807px;width:837px;height:21px;background:#fff;border-bottom:1px solid #cdd4e6;border-left:1px solid #cdd4e6"></div>
<div style="left:638px;top:807px;width:1px;height:20px;background:#cdd4e6"></div>
<div style="left:710px;top:807px;width:1px;height:20px;background:#cdd4e6"></div>
<div style="left:782px;top:807px;width:1px;height:20px;background:#cdd4e6"></div>
<span class="t" style="left:61.2px;top:810.50px;font-size:13px;line-height:13px;color:#111;letter-spacing:-0.143px;">MS-Word</span>
<span class="t" style="left:787.4px;top:810.50px;font-size:13px;line-height:13px;color:#111;letter-spacing:0.000px;">3</span>
<div style="left:56px;top:828px;width:837px;height:21px;background:#fff;border-bottom:1px solid #cdd4e6;border-left:1px solid #cdd4e6"></div>
<div style="left:638px;top:828px;width:1px;height:20px;background:#cdd4e6"></div>
<div style="left:710px;top:828px;width:1px;height:20px;background:#cdd4e6"></div>
<div style="left:782px;top:828px;width:1px;height:20px;background:#cdd4e6"></div>
<span class="t" style="left:61.2px;top:831.50px;font-size:13px;line-height:13px;color:#111;letter-spacing:-0.546px;">MS-Excel</span>
<span class="t" style="left:787.4px;top:831.50px;font-size:13px;line-height:13px;color:#111;letter-spacing:0.000px;">3</span>
<div style="left:56px;top:849px;width:837px;height:21px;background:#fff;border-bottom:1px solid #cdd4e6;border-left:1px solid #cdd4e6"></div>
<div style="left:638px;top:849px;width:1px;height:20px;background:#cdd4e6"></div>
<div style="left:710px;top:849px;width:1px;height:20px;background:#cdd4e6"></div>
<div style="left:782px;top:849px;width:1px;height:20px;background:#cdd4e6"></div>
<span class="t" style="left:61.2px;top:852.50px;font-size:13px;line-height:13px;color:#111;letter-spacing:-0.107px;">Accounting Software</span>
<span class="t" style="left:700.5px;top:852.50px;font-size:13px;line-height:13px;color:#111;letter-spacing:0.000px;">6</span>
<span class="t" style="left:787.4px;top:852.50px;font-size:13px;line-height:13px;color:#111;letter-spacing:0.000px;">1</span>
<div style="left:56px;top:870px;width:837px;height:3px;background:#fff;border-left:1px solid #cdd4e6"></div>
<div style="left:638px;top:870px;width:1px;height:3px;background:#cdd4e6"></div>
<div style="left:710px;top:870px;width:1px;height:3px;background:#cdd4e6"></div>
<div style="left:782px;top:870px;width:1px;height:3px;background:#cdd4e6"></div>
<div style="left:7px;top:423px;width:13px;height:2px;background:linear-gradient(#a9a9a9 0,#a9a9a9 1px,#fbfbfb 1px)"></div>
<div style="left:7px;top:444px;width:13px;height:2px;background:linear-gradient(#a9a9a9 0,#a9a9a9 1px,#fbfbfb 1px)"></div>
<div style="left:7px;top:465px;width:13px;height:2px;background:linear-gradient(#a9a9a9 0,#a9a9a9 1px,#fbfbfb 1px)"></div>
<div style="left:7px;top:499px;width:13px;height:2px;background:linear-gradient(#a9a9a9 0,#a9a9a9 1px,#fbfbfb 1px)"></div>
<div style="left:7px;top:520px;width:13px;height:2px;background:linear-gradient(#a9a9a9 0,#a9a9a9 1px,#fbfbfb 1px)"></div>
<div style="left:7px;top:541px;width:13px;height:2px;background:linear-gradient(#a9a9a9 0,#a9a9a9 1px,#fbfbfb 1px)"></div>
<div style="left:7px;top:562px;width:13px;height:2px;background:linear-gradient(#a9a9a9 0,#a9a9a9 1px,#fbfbfb 1px)"></div>
<div style="left:7px;top:583px;width:13px;height:2px;background:linear-gradient(#a9a9a9 0,#a9a9a9 1px,#fbfbfb 1px)"></div>
<div style="left:7px;top:604px;width:13px;height:2px;background:linear-gradient(#a9a9a9 0,#a9a9a9 1px,#fbfbfb 1px)"></div>
<div style="left:7px;top:625px;width:13px;height:2px;background:linear-gradient(#a9a9a9 0,#a9a9a9 1px,#fbfbfb 1px)"></div>
<div style="left:7px;top:646px;width:13px;height:2px;background:linear-gradient(#a9a9a9 0,#a9a9a9 1px,#fbfbfb 1px)"></div>
<div style="left:7px;top:667px;width:13px;height:2px;background:linear-gradient(#a9a9a9 0,#a9a9a9 1px,#fbfbfb 1px)"></div>
<div style="left:7px;top:688px;width:13px;height:2px;background:linear-gradient(#a9a9a9 0,#a9a9a9 1px,#fbfbfb 1px)"></div>
<div style="left:7px;top:709px;width:13px;height:2px;background:linear-gradient(#a9a9a9 0,#a9a9a9 1px,#fbfbfb 1px)"></div>
<div style="left:7px;top:730px;width:13px;height:2px;background:linear-gradient(#a9a9a9 0,#a9a9a9 1px,#fbfbfb 1px)"></div>
<div style="left:7px;top:751px;width:13px;height:2px;background:linear-gradient(#a9a9a9 0,#a9a9a9 1px,#fbfbfb 1px)"></div>
<div style="left:7px;top:785px;width:13px;height:2px;background:linear-gradient(#a9a9a9 0,#a9a9a9 1px,#fbfbfb 1px)"></div>
<div style="left:7px;top:806px;width:13px;height:2px;background:linear-gradient(#a9a9a9 0,#a9a9a9 1px,#fbfbfb 1px)"></div>
<div style="left:7px;top:827px;width:13px;height:2px;background:linear-gradient(#a9a9a9 0,#a9a9a9 1px,#fbfbfb 1px)"></div>
<div style="left:7px;top:848px;width:13px;height:2px;background:linear-gradient(#a9a9a9 0,#a9a9a9 1px,#fbfbfb 1px)"></div>
<div style="left:7px;top:869px;width:13px;height:2px;background:linear-gradient(#a9a9a9 0,#a9a9a9 1px,#fbfbfb 1px)"></div>
<div style="left:38px;top:424px;width:1px;height:449px;background:#cdd4e6"></div>
<div style="left:39px;top:499px;width:18px;height:1px;background:#cdd4e6"></div>
<div style="left:39px;top:785px;width:18px;height:1px;background:#cdd4e6"></div>
<svg style="left:10.5px;top:505.5px" width="7" height="9" viewBox="0 0 7 9"><path d="M1 0.8L5.4 4.5L1 8.2" fill="none" stroke="#333" stroke-width="1.6"/></svg>
<div style="left:893px;top:403px;width:17px;height:470px;background:#484848"></div>
<div style="left:894px;top:421px;width:15px;height:304px;background:linear-gradient(90deg,#f2f2f2 0,#e6e6e6 3px,#d8d8d8 6px,#c5c5c5 6.5px,#c8c8c8 11px,#d3d3d3 15px);border-top:1px solid #fff;border-bottom:1px solid #9a9a9a"></div>
<svg style="left:897px;top:408px" width="10" height="6" viewBox="0 0 10 6"><path d="M5 0L10 6H0Z" fill="#d2d2d2"/></svg>
<svg style="left:897px;top:863px" width="10" height="6" viewBox="0 0 10 6"><path d="M0 0H10L5 6Z" fill="#dcdcdc"/></svg>
<div style="left:897px;top:569px;width:9px;height:8px;background:repeating-linear-gradient(#5c5c5c 0,#5c5c5c 1px,#e9e9e9 1px,#e9e9e9 2px)"></div>
<div style="left:913.3px;top:325px;width:3.4px;height:549.5px;background:#8f8f8f"></div>
<div style="left:914px;top:592px;width:2px;height:14px;background:repeating-linear-gradient(#fff 0,#fff 2px,transparent 2px,transparent 4px)"></div>
<div style="left:921.5px;top:326px;width:129.0px;height:25px;background:#e8e8e8;border:1px solid #939393;border-bottom:none;border-radius:4px 4px 0 0;box-shadow:inset 1px 1px 0 #f6f6f6"></div>
<span class="t" style="left:930.7px;top:330.70px;font-size:13px;line-height:13px;color:#1e1e1e;letter-spacing:-0.158px;">Conducted trainings</span>
<div style="left:1052.7px;top:326.5px;width:180.0999999999999px;height:22.0px;background:linear-gradient(#a0a0a0 0,#858585 22%,#6c6c6c 50%,#707070 75%,#898989 100%);border:1px solid #585858;border-bottom:none;border-radius:4px 4px 0 0;box-shadow:inset 0 1px 0 rgba(255,255,255,.18)"></div>
<span class="t" style="left:1061.5px;top:330.70px;font-size:13px;line-height:13px;color:#fff;letter-spacing:-0.091px;">Available measures for tasks</span>
<div style="left:918px;top:348px;width:522px;height:524px;background:#fff;border:2px solid #a9a9a9;border-top-color:#929292;box-shadow:inset 0 0 0 1px #d9d9d9"></div>
<div style="left:920.5px;top:350.7px;width:517px;height:23px;background:linear-gradient(#fdfdfd,#f1f1f1 45%,#e4e4e4);border-bottom:1px solid #b4b4b4;border-radius:0 4px 0 0"></div>
<svg style="left:920.5px;top:350.7px" width="4" height="4" viewBox="0 0 4 4"><path d="M0 0H4Q0 0 0 4Z" fill="#777"/></svg>
<div style="left:935px;top:351.5px;width:1px;height:21px;background:#b4b4b4"></div>
<div style="left:1126px;top:351.5px;width:1px;height:21px;background:#b4b4b4"></div>
<div style="left:1230px;top:351.5px;width:1px;height:21px;background:#b4b4b4"></div>
<div style="left:1335px;top:351.5px;width:1px;height:21px;background:#b4b4b4"></div>
<div style="left:1436.4px;top:351.5px;width:1px;height:21px;background:#b4b4b4"></div>
<span class="t" style="left:940.5px;top:355.00px;font-size:13px;line-height:13px;color:#1e1e1e;letter-spacing:-0.062px;">Subject</span>
<span class="t" style="left:1131.0px;top:355.00px;font-size:13px;line-height:13px;color:#1e1e1e;letter-spacing:0.015px;">carried out on</span>
<span class="t" style="left:1235.0px;top:355.00px;font-size:13px;line-height:13px;color:#1e1e1e;letter-spacing:-0.210px;">Planning date</span>
<span class="t" style="left:1340.5px;top:355.00px;font-size:13px;line-height:13px;color:#1e1e1e;letter-spacing:-0.078px;">Task</span>
<div style="left:1101px;top:885px;width:167px;height:43px;border:1px solid #8a8a8a;border-radius:3px;background:linear-gradient(#fbfbfb 0,#e9e9e9 9px,rgba(0,0,0,0) 9px),radial-gradient(ellipse 70% 150% at 50% 115%,#f3f3f3 0,#dfdfdf 50%,#c3c3c3 100%);box-shadow:inset 0 0 0 1px rgba(255,255,255,.55)"></div>
<span class="t" style="left:1170.48px;top:900.00px;font-size:13px;line-height:13px;color:#222;letter-spacing:-0.700px;">Save</span>
<div style="left:1275px;top:886px;width:167px;height:43px;border:1px solid #8a8a8a;border-radius:3px;background:linear-gradient(#fbfbfb 0,#e9e9e9 9px,rgba(0,0,0,0) 9px),radial-gradient(ellipse 70% 150% at 50% 115%,#f3f3f3 0,#dfdfdf 50%,#c3c3c3 100%);box-shadow:inset 0 0 0 1px rgba(255,255,255,.55)"></div>
<span class="t" style="left:1343.0px;top:901.00px;font-size:13px;line-height:13px;color:#222;letter-spacing:-0.663px;">Close</span>
</body></html>
